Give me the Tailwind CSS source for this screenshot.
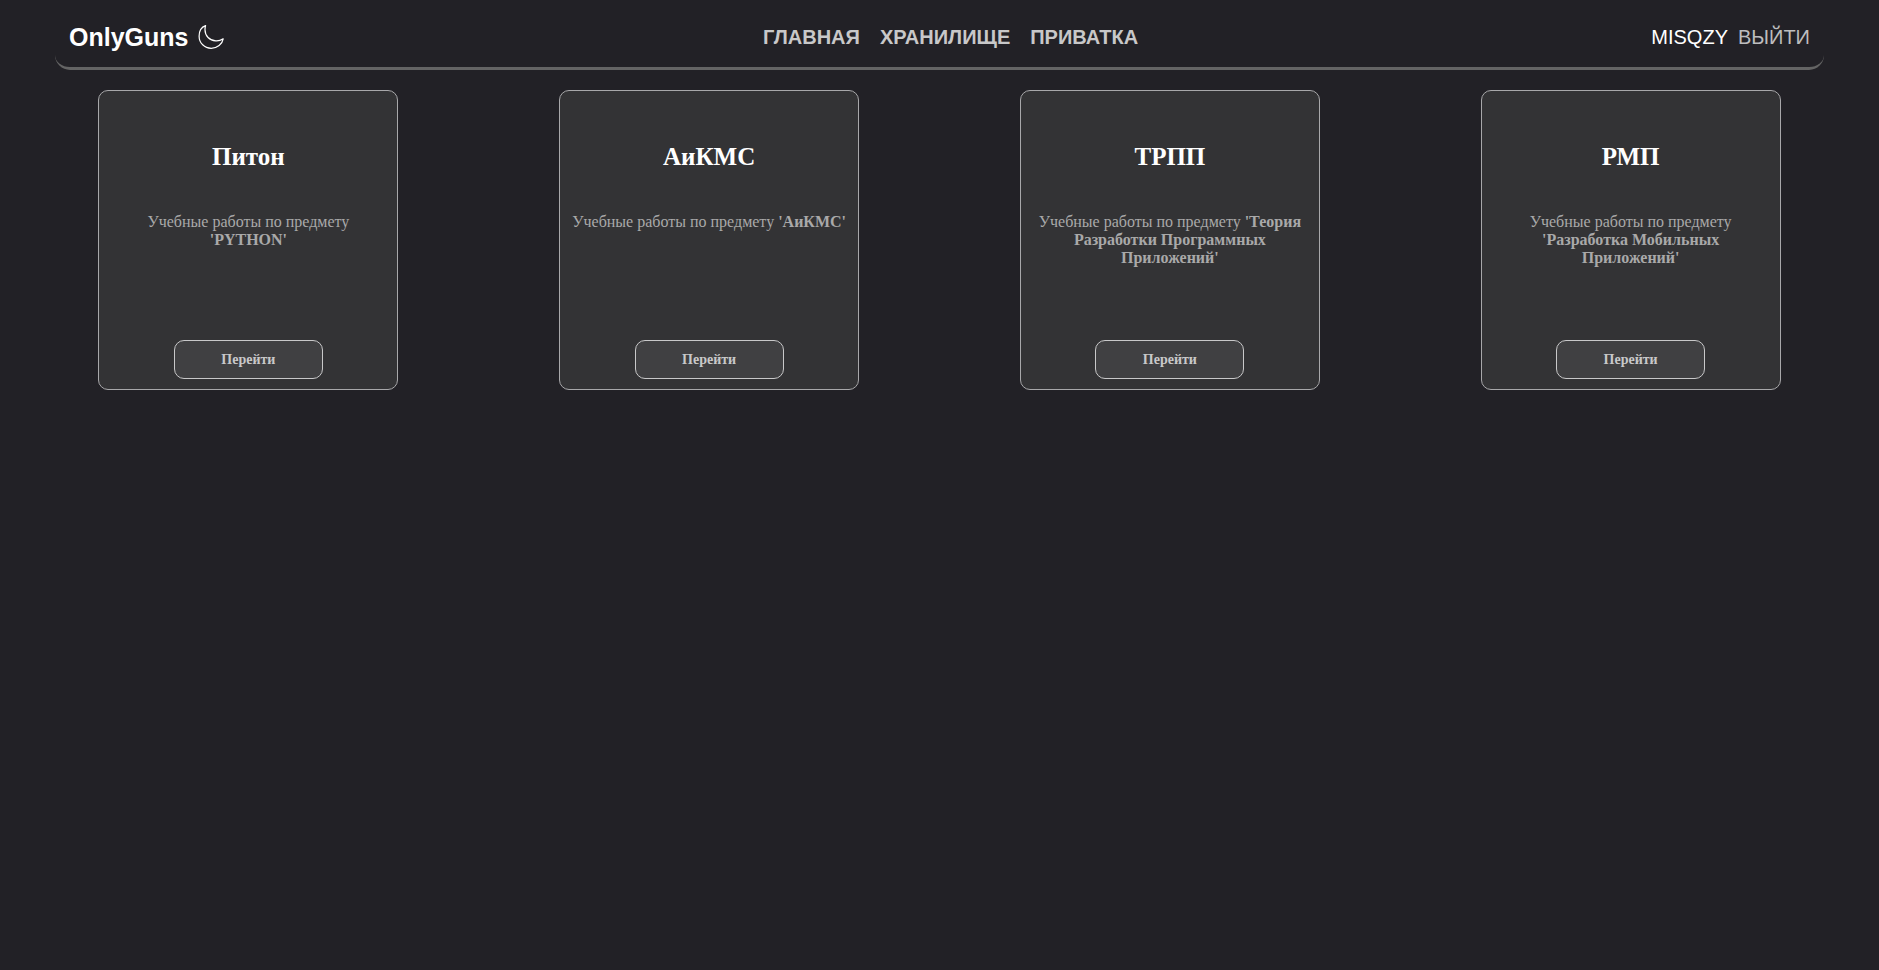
<!DOCTYPE html>
<html lang="ru">
<head>
<meta charset="utf-8">
<title>OnlyGuns</title>
<script src="https://cdn.jsdelivr.net/npm/@tailwindcss/browser@4"></script>
</head>
<body class="min-h-screen bg-[#222126] font-['Liberation_Serif',serif] text-white">
<header class="mx-[55px] grid h-[70px] grid-cols-[1fr_auto_1fr] items-center rounded-b-[15px] border-b-3 border-[#646464] px-[14px] pt-[7px] font-['Liberation_Sans',sans-serif] text-xl">
  <div class="flex items-center gap-[9px]">
    <a href="#" class="text-[25px] font-bold">OnlyGuns</a>
    <button type="button" aria-label="Сменить тему" class="size-7">
      <svg viewBox="0 0 28 28" class="size-7" fill="none" stroke="#fff" stroke-width="1.2" stroke-linejoin="round"><path d="M8.6 2.6C4.6 4 2.1 8 2.1 13.2C2.1 20 7.6 25.3 14.2 25.3C20.3 25.3 25.2 21.2 26.2 15.8C23.8 17.4 21.3 18.1 18.8 17.9C12.6 17.5 8 13 8 6.8C8 5.3 8.2 3.9 8.6 2.6Z"/></svg>
    </button>
  </div>
  <nav class="flex gap-5 pl-[22px] font-bold text-[#c8c8c9]">
    <a href="#">ГЛАВНАЯ</a>
    <a href="#">ХРАНИЛИЩЕ</a>
    <a href="#">ПРИВАТКА</a>
  </nav>
  <div class="flex justify-end gap-[10px]">
    <a href="#">MISQZY</a>
    <a href="#" class="text-[#bdbdbe]">ВЫЙТИ</a>
  </div>
</header>
<main class="grid grid-cols-4 justify-items-center px-[18px] pt-5">
  <article class="flex h-[300px] w-[300px] flex-col items-center rounded-[10px] border border-[#a8a8aa] bg-[#333335] px-[10px] pt-[52px] pb-[10px] text-center">
    <h2 class="text-[25px] leading-7 font-bold">Питон</h2>
    <p class="mt-[42px] text-base leading-[18px] text-[#a9a9a9]">Учебные работы по предмету <b>'PYTHON'</b></p>
    <button type="button" class="mt-auto h-[39px] w-[149px] rounded-[10px] border border-[#c8c8c9] bg-[#404042] text-sm font-bold text-[#c8c8c9]">Перейти</button>
  </article>
  <article class="flex h-[300px] w-[300px] flex-col items-center rounded-[10px] border border-[#a8a8aa] bg-[#333335] px-[10px] pt-[52px] pb-[10px] text-center">
    <h2 class="text-[25px] leading-7 font-bold">АиКМС</h2>
    <p class="mt-[42px] text-base leading-[18px] text-[#a9a9a9]">Учебные работы по предмету <b>'АиКМС'</b></p>
    <button type="button" class="mt-auto h-[39px] w-[149px] rounded-[10px] border border-[#c8c8c9] bg-[#404042] text-sm font-bold text-[#c8c8c9]">Перейти</button>
  </article>
  <article class="flex h-[300px] w-[300px] flex-col items-center rounded-[10px] border border-[#a8a8aa] bg-[#333335] px-[10px] pt-[52px] pb-[10px] text-center">
    <h2 class="text-[25px] leading-7 font-bold">ТРПП</h2>
    <p class="mt-[42px] text-base leading-[18px] text-[#a9a9a9]">Учебные работы по предмету <b>'Теория Разработки Программных Приложений'</b></p>
    <button type="button" class="mt-auto h-[39px] w-[149px] rounded-[10px] border border-[#c8c8c9] bg-[#404042] text-sm font-bold text-[#c8c8c9]">Перейти</button>
  </article>
  <article class="flex h-[300px] w-[300px] flex-col items-center rounded-[10px] border border-[#a8a8aa] bg-[#333335] px-[10px] pt-[52px] pb-[10px] text-center">
    <h2 class="text-[25px] leading-7 font-bold">РМП</h2>
    <p class="mt-[42px] text-base leading-[18px] text-[#a9a9a9]">Учебные работы по предмету <b>'Разработка Мобильных Приложений'</b></p>
    <button type="button" class="mt-auto h-[39px] w-[149px] rounded-[10px] border border-[#c8c8c9] bg-[#404042] text-sm font-bold text-[#c8c8c9]">Перейти</button>
  </article>
</main>
</body>
</html>
